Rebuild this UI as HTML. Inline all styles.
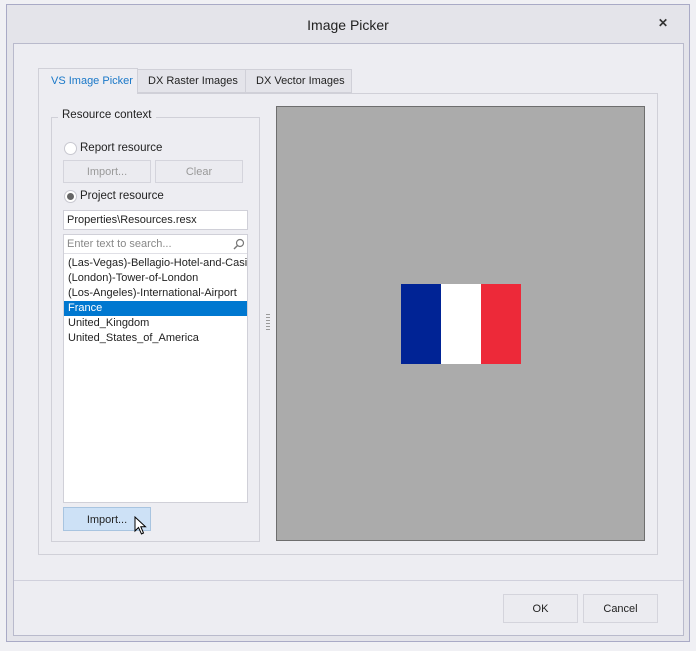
<!DOCTYPE html><html><head><style>
*{box-sizing:border-box;margin:0;padding:0}
body{width:696px;height:651px;background:#f0f0f4;position:relative;font-family:"Liberation Sans",sans-serif;font-size:11px;color:#222;overflow:hidden}
.a{position:absolute}
.btn{position:absolute;border:1px solid #d4d4dc;background:#ebebf0;text-align:center;color:#222}
</style></head><body>
<div class="a" style="left:6px;top:4px;width:684px;height:638px;border:1px solid #a9aac6;background:#e4e4ea"></div>
<div class="a" style="left:0;top:17px;width:696px;text-align:center;font-size:14px;color:#222">Image Picker</div>
<div class="a" style="left:658px;top:16px;font-size:12px;font-weight:bold;color:#333">✕</div>
<div class="a" style="left:13px;top:43px;width:671px;height:593px;border:1px solid #b9bacc;background:#ededf2"></div>
<div class="a" style="left:14px;top:580px;width:669px;height:1px;background:#d0d0dc"></div>
<div class="a" style="left:38px;top:93px;width:620px;height:462px;border:1px solid #d0d0d8"></div>
<div class="a" style="left:38px;top:68px;width:100px;height:26px;border:1px solid #d0d0d8;border-bottom:none;background:#ededf2;color:#1a78c8;padding:6px 0 0 12px">VS Image Picker</div>
<div class="a" style="left:137px;top:69px;width:109px;height:24px;border:1px solid #d0d0d8;background:#e4e4ea;padding:5px 0 0 10px">DX Raster Images</div>
<div class="a" style="left:245px;top:69px;width:107px;height:24px;border:1px solid #d0d0d8;background:#e4e4ea;padding:5px 0 0 10px">DX Vector Images</div>
<div class="a" style="left:51px;top:117px;width:209px;height:425px;border:1px solid #d0d0d8"></div>
<div class="a" style="left:58px;top:109px;background:#ededf2;padding:0 4px;font-size:11.5px">Resource context</div>
<div class="a" style="left:64px;top:142px;width:13px;height:13px;border-radius:50%;border:1px solid #c8c8d0;background:#fff"></div>
<div class="a" style="left:80px;top:142px;font-size:11.5px">Report resource</div>
<div class="btn" style="left:63px;top:160px;width:88px;height:23px;color:#999;padding-top:5px">Import...</div>
<div class="btn" style="left:155px;top:160px;width:88px;height:23px;color:#999;padding-top:5px">Clear</div>
<div class="a" style="left:64px;top:190px;width:13px;height:13px;border-radius:50%;border:1px solid #c8c8d0;background:#fff"></div>
<div class="a" style="left:67px;top:193px;width:7px;height:7px;border-radius:50%;background:#666"></div>
<div class="a" style="left:80px;top:190px;font-size:11.5px">Project resource</div>
<div class="a" style="left:63px;top:210px;width:185px;height:20px;border:1px solid #d0d0d8;background:#fff;padding:3px 0 0 3px">Properties\Resources.resx</div>
<div class="a" style="left:63px;top:234px;width:185px;height:269px;border:1px solid #d0d0d8;background:#fff;overflow:hidden">
<div style="height:19px;border-bottom:1px solid #e0e0e6;padding:3px 0 0 3px;color:#888">Enter text to search...</div>
<svg class="a" style="left:169px;top:3px" width="12" height="12"><circle cx="7" cy="5" r="3.5" fill="none" stroke="#777" stroke-width="1.2"/><path d="M4.5 7.5L1 11" stroke="#777" stroke-width="1.4"/></svg>
<div style="padding:2px 0 0 0;line-height:15px;font-size:11px;white-space:nowrap">
<div style="padding-left:4px">(Las-Vegas)-Bellagio-Hotel-and-Casino</div>
<div style="padding-left:4px">(London)-Tower-of-London</div>
<div style="padding-left:4px">(Los-Angeles)-International-Airport</div>
<div style="padding-left:4px;background:#0078d0;color:#fff">France</div>
<div style="padding-left:4px">United_Kingdom</div>
<div style="padding-left:4px">United_States_of_America</div>
</div></div>
<div class="btn" style="left:63px;top:507px;width:88px;height:24px;background:#cde1f6;border-color:#a8c4e0;padding-top:6px">Import...</div>
<svg class="a" style="left:134px;top:516px" width="13" height="20"><path d="M1 1L1 15L4.5 11.5L7.5 18L9.5 17L6.8 10.7L11.5 10.7Z" fill="#fff" stroke="#000" stroke-width="1"/></svg>
<div class="a" style="left:266px;top:314px;width:4px;height:18px;background:repeating-linear-gradient(#999 0 1px,transparent 1px 3px)"></div>
<div class="a" style="left:276px;top:106px;width:369px;height:435px;border:1px solid #6e6e6e;background:#ababab"></div>
<div class="a" style="left:401px;top:284px;width:40px;height:80px;background:#002395"></div>
<div class="a" style="left:441px;top:284px;width:40px;height:80px;background:#fff"></div>
<div class="a" style="left:481px;top:284px;width:40px;height:80px;background:#ed2939"></div>
<div class="btn" style="left:503px;top:594px;width:75px;height:29px;padding-top:8px">OK</div>
<div class="btn" style="left:583px;top:594px;width:75px;height:29px;padding-top:8px">Cancel</div>
</body></html>
